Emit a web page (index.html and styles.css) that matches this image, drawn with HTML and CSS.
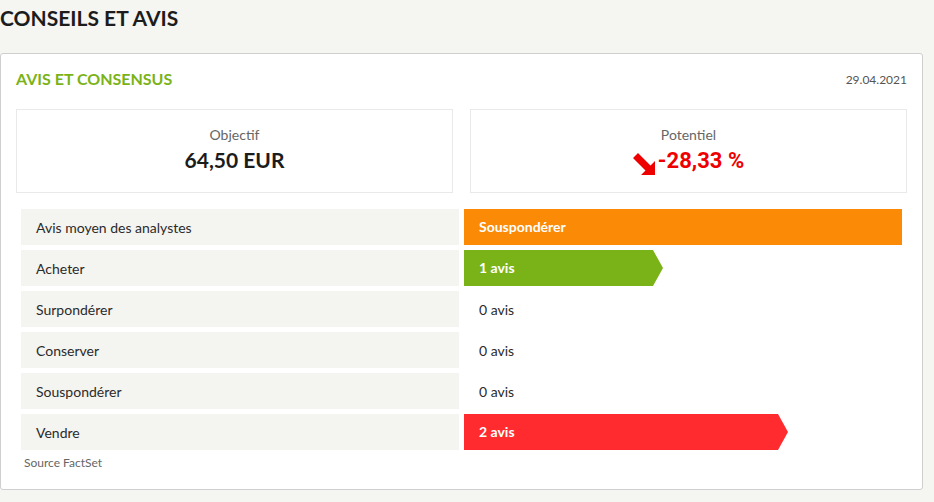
FILE: index.html
```html
<!DOCTYPE html>
<html lang="fr">
<head>
<meta charset="utf-8">
<link rel="stylesheet" href="styles.css">
</head>
<body>
<h1 class="page-title">CONSEILS ET AVIS</h1>
<section class="card">
  <header class="card-head">
    <h2 class="card-title">AVIS ET CONSENSUS</h2>
    <span class="card-date">29.04.2021</span>
  </header>
  <div class="kpis">
    <div class="kpi">
      <div class="kpi-label">Objectif</div>
      <div class="kpi-value">64,50 EUR</div>
    </div>
    <div class="kpi">
      <div class="kpi-label">Potentiel</div>
      <div class="kpi-value neg">
        <svg class="arrow" width="22" height="22" viewBox="0 0 22 22"><polygon points="5,0 17.5,12.5 22,8 22,22 8,22 12.5,17.5 0,5" fill="#ee0000"/></svg>
        <span>-28,33 %</span>
      </div>
    </div>
  </div>
  <table class="ratings">
    <tr><td class="lbl">Avis moyen des analystes</td><td class="val"><div class="bar orange full">Souspondérer</div></td></tr>
    <tr><td class="lbl">Acheter</td><td class="val"><div class="bar green arrowed" style="width:199px">1 avis</div></td></tr>
    <tr><td class="lbl">Surpondérer</td><td class="val"><span class="plain">0 avis</span></td></tr>
    <tr><td class="lbl">Conserver</td><td class="val"><span class="plain">0 avis</span></td></tr>
    <tr><td class="lbl">Souspondérer</td><td class="val"><span class="plain">0 avis</span></td></tr>
    <tr><td class="lbl">Vendre</td><td class="val"><div class="bar red arrowed" style="width:324px">2 avis</div></td></tr>
  </table>
  <p class="source">Source FactSet</p>
</section>
</body>
</html>
```

FILE: styles.css
```css
html, body {
  margin: 0;
  padding: 0;
  background: #f5f5f1;
  font-family: Lato, "Open Sans", sans-serif;
  color: #222;
}
.page-title {
  margin: 0;
  padding: 5px 0 0 0;
  font-size: 21px;
  line-height: 26px;
  font-weight: 700;
  color: #1c1c1c;
  height: 48px;
}
.card {
  width: 923px;
  height: 437px;
  box-sizing: border-box;
  background: #fff;
  border: 1px solid #cfcfcf;
  border-radius: 3px;
  padding: 13px 15px 0 15px;
}
.card-head {
  display: flex;
  justify-content: space-between;
  align-items: center;
  height: 24px;
}
.card-title {
  margin: 0;
  font-size: 16px;
  font-weight: 700;
  color: #7ab317;
  line-height: 20px;
}
.card-date {
  font-size: 12px;
  color: #555;
}
.kpis {
  display: flex;
  gap: 17px;
  margin-top: 18px;
}
.kpi {
  flex: 1;
  height: 84px;
  box-sizing: border-box;
  border: 1px solid #e9e9e9;
  display: flex;
  flex-direction: column;
  align-items: center;
  padding-top: 16px;
}
.kpi-label {
  font-size: 14px;
  color: #666;
  line-height: 18px;
}
.kpi-value {
  font-size: 21px;
  font-weight: 700;
  line-height: 26px;
  margin-top: 3px;
  color: #1c1c1c;
  display: flex;
  align-items: center;
  gap: 3px;
}
.kpi-value.neg {
  font-family: Roboto, "Liberation Sans", sans-serif;
  font-size: 22px;
  color: #ee0000;
}
.arrow {
  margin-top: 6px;
}
.ratings {
  margin-top: 11px;
  width: 891px;
  border-spacing: 5px;
  border-collapse: separate;
}
.ratings td {
  height: 36px;
  padding: 0;
  font-size: 14px;
}
.lbl {
  width: 438px;
  background: #f4f4f0;
  padding-left: 15px !important;
  box-sizing: border-box;
  color: #2b2b2b;
}
.val {
  width: 438px;
}
.bar {
  height: 36px;
  line-height: 36px;
  box-sizing: border-box;
  padding-left: 15px;
  color: #fff;
  font-weight: 700;
}
.bar.full { width: 438px; }
.orange { background: #fb8a07; }
.green { background: #7ab317; }
.red { background: #ff2b2e; }
.arrowed {
  clip-path: polygon(0 0, calc(100% - 10px) 0, 100% 50%, calc(100% - 10px) 100%, 0 100%);
}
.plain {
  padding-left: 15px;
  color: #2b2b2b;
}
.source {
  margin: 0 0 0 8px;
  font-size: 12px;
  color: #666;
}
```
